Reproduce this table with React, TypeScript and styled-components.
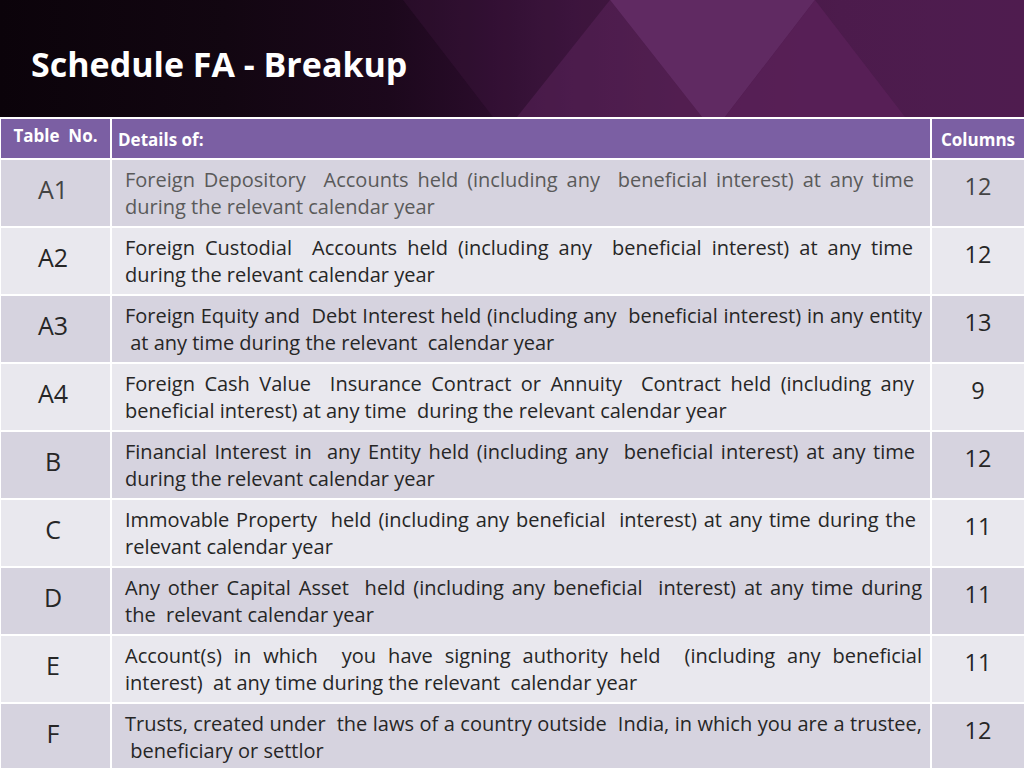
import styled, { createGlobalStyle } from "styled-components";

const GlobalStyle = createGlobalStyle`
  html, body {
    margin: 0;
    padding: 0;
  }
  body {
    width: 1024px;
    height: 768px;
    overflow: hidden;
    background: #fff;
    font-family: "Open Sans", "Noto Sans", sans-serif;
  }
`;

const Slide = styled.div`
  width: 1024px;
  height: 768px;
  overflow: hidden;
  display: flex;
  flex-direction: column;
  background: #fff;
`;

const Banner = styled.header`
  position: relative;
  flex: none;
  height: 117px;
  box-sizing: border-box;
  padding: 41px 0 0 31px;
  background: linear-gradient(
    90deg,
    #0b030a 0%,
    #120611 22%,
    #1c081c 38%,
    #2a0c2b 48%,
    #361237 56%,
    #43173f 68%,
    #4a1a4a 82%,
    #4d1c4e 100%
  );
`;

const BannerArt = styled.svg`
  position: absolute;
  inset: 0;
  width: 100%;
  height: 100%;
`;

const Title = styled.h1`
  position: relative;
  margin: 0;
  font-size: 34px;
  line-height: 1.362;
  font-weight: 700;
  color: #fff;
`;

const Table = styled.div`
  display: grid;
  grid-template-columns: 109px 1fr 92px;
  grid-template-rows: 39px;
  grid-auto-rows: 66px;
  gap: 2px;
  padding: 2px 0 0 1px;
  background: #fff;
`;

const HeadCell = styled.div<{ $top: number; $align?: string }>`
  box-sizing: border-box;
  background: #7b5fa3;
  color: #fff;
  font-size: 17px;
  font-weight: 700;
  line-height: 20px;
  padding: ${(p) => p.$top}px 6px 0 6px;
  text-align: ${(p) => p.$align || "left"};
  white-space: pre;
`;

const Cell = styled.div<{ $dark: boolean }>`
  box-sizing: border-box;
  background: ${(p) => (p.$dark ? "#d6d3df" : "#e9e8ee")};
`;

const TagCell = styled(Cell)<{ $muted: boolean }>`
  padding: 13px 5px 0 0;
  text-align: center;
  font-size: 25px;
  line-height: 33px;
  color: ${(p) => (p.$muted ? "#444" : "#262626")};
`;

const CountCell = styled(Cell)<{ $muted: boolean }>`
  padding-top: 11px;
  text-align: center;
  font-size: 23.5px;
  line-height: 31px;
  color: ${(p) => (p.$muted ? "#444" : "#262626")};
`;

const DetailCell = styled(Cell)<{ $muted: boolean }>`
  padding: 6px 6px 0 13px;
  font-size: 20px;
  line-height: 27px;
  color: ${(p) => (p.$muted ? "#5a5a5a" : "#262626")};
`;

const FullLine = styled.span<{ $inset: number }>`
  display: block;
  margin-right: ${(p) => p.$inset}px;
  white-space: pre-wrap;
  text-align: justify;
  text-align-last: justify;
`;

const LastLine = styled.span`
  display: block;
  white-space: pre-wrap;
`;

type Entry = {
  tag: string;
  lines: [string, string];
  inset: number;
  count: number;
};

const entries: Entry[] = [
  {
    tag: "A1",
    lines: [
      "Foreign Depository  Accounts held (including any  beneficial interest) at any time",
      "during the relevant calendar year",
    ],
    inset: 10,
    count: 12,
  },
  {
    tag: "A2",
    lines: [
      "Foreign Custodial  Accounts held (including any  beneficial interest) at any time",
      "during the relevant calendar year",
    ],
    inset: 11,
    count: 12,
  },
  {
    tag: "A3",
    lines: [
      "Foreign Equity and  Debt Interest held (including any  beneficial interest) in any entity",
      " at any time during the relevant  calendar year",
    ],
    inset: 2,
    count: 13,
  },
  {
    tag: "A4",
    lines: [
      "Foreign Cash Value  Insurance Contract or Annuity  Contract held (including any",
      "beneficial interest) at any time  during the relevant calendar year",
    ],
    inset: 10,
    count: 9,
  },
  {
    tag: "B",
    lines: [
      "Financial Interest in  any Entity held (including any  beneficial interest) at any time",
      "during the relevant calendar year",
    ],
    inset: 9,
    count: 12,
  },
  {
    tag: "C",
    lines: [
      "Immovable Property  held (including any beneficial  interest) at any time during the",
      "relevant calendar year",
    ],
    inset: 8,
    count: 11,
  },
  {
    tag: "D",
    lines: [
      "Any other Capital Asset  held (including any beneficial  interest) at any time during",
      "the  relevant calendar year",
    ],
    inset: 2,
    count: 11,
  },
  {
    tag: "E",
    lines: [
      "Account(s) in which  you have signing authority held  (including any beneficial",
      "interest)  at any time during the relevant  calendar year",
    ],
    inset: 2,
    count: 11,
  },
  {
    tag: "F",
    lines: [
      "Trusts, created under  the laws of a country outside  India, in which you are a trustee,",
      " beneficiary or settlor",
    ],
    inset: 2,
    count: 12,
  },
];

function App() {
  return (
    <Slide>
      <GlobalStyle />
      <Banner>
        <BannerArt viewBox="0 0 1024 117" preserveAspectRatio="none">
          <polygon points="403,0 1024,0 1024,117 493,117" fill="#5a235a" opacity="0.18" />
          <polygon points="517,117 610,0 702,117" fill="#6a2a6a" opacity="0.35" />
          <polygon points="610,0 815,0 725,117 702,117" fill="#602a62" />
          <polygon points="725,117 815,0 905,117" fill="#5a2159" opacity="0.8" />
        </BannerArt>
        <Title>Schedule FA - Breakup</Title>
      </Banner>
      <Table>
        <HeadCell $top={7} $align="center">
          {"Table  No."}
        </HeadCell>
        <HeadCell $top={11}>Details of:</HeadCell>
        <HeadCell $top={11} $align="center">
          Columns
        </HeadCell>
        {entries.map((e, i) => {
          const dark = i % 2 === 0;
          const muted = i === 0;
          return [
            <TagCell key={e.tag + "-t"} $dark={dark} $muted={muted}>
              {e.tag}
            </TagCell>,
            <DetailCell key={e.tag + "-d"} $dark={dark} $muted={muted}>
              <FullLine $inset={e.inset}>{e.lines[0]}</FullLine>
              <LastLine>{e.lines[1]}</LastLine>
            </DetailCell>,
            <CountCell key={e.tag + "-c"} $dark={dark} $muted={muted}>
              {e.count}
            </CountCell>,
          ];
        })}
      </Table>
    </Slide>
  );
}

export default App;
